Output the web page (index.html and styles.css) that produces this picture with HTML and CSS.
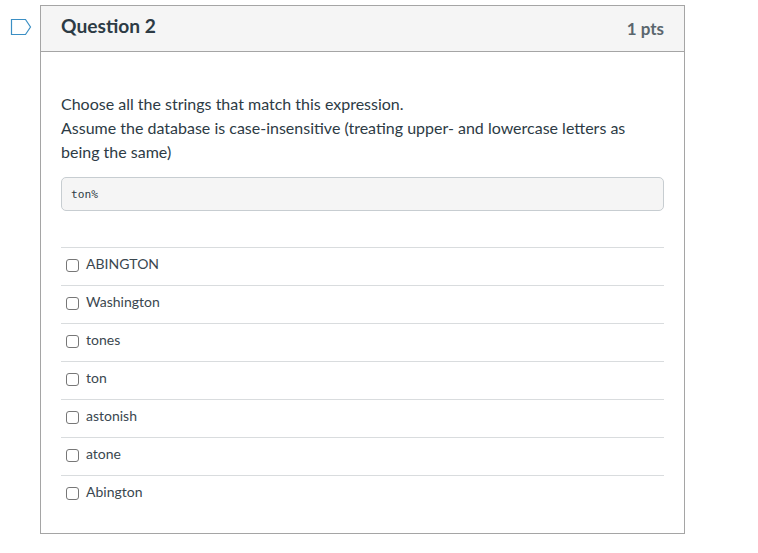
FILE: index.html

```html
<!DOCTYPE html>
<html lang="en">
<head>
  <meta charset="UTF-8" />
  <title>Question 2</title>
  <link rel="stylesheet" href="styles.css">
</head>
<body>

  <div class="quiz">
    <svg class="flag" width="22" height="18" viewBox="0 0 22 18">
      <path d="M1.500 1.500h14l5 7.500-5 7.500h-14z" fill="none" stroke="#3b8fc4" stroke-width="1.200"/>
    </svg>

    <div class="question">
      <div class="header">
        <h2>Question 2</h2>
        <span class="pts">1 pts</span>
      </div>

      <div class="content">
        <p>Choose all the strings that match this expression.<br>Assume the database is case-insensitive (treating upper- and lowercase letters as being the same)</p>

        <pre>ton%</pre>

        <div class="answers">
          <label><input type="checkbox"> ABINGTON</label>
          <label><input type="checkbox"> Washington</label>
          <label><input type="checkbox"> tones</label>
          <label><input type="checkbox"> ton</label>
          <label><input type="checkbox"> astonish</label>
          <label><input type="checkbox"> atone</label>
          <label><input type="checkbox"> Abington</label>
        </div>
      </div>
    </div>
  </div>

</body>
</html>
```

FILE: styles.css

```css
body {
  font-family: 'Lato', sans-serif;
  background: #fff;
  color: #2d3b45;
  margin: 0;
  padding: 0;
}

.quiz {
  display: flex;
  align-items: flex-start;
  padding: 5px 0 0 10px;
}

.flag {
  margin-top: 13px;
  margin-right: 8px;
}

.question {
  width: 645px;
  box-sizing: border-box;
  border: 1px solid #a5a5a5;
}

.header {
  display: flex;
  justify-content: space-between;
  align-items: center;
  height: 45px;
  padding: 0 20px;
  background: #f5f5f5;
  border-bottom: 1px solid #a5a5a5;
}

.header h2 {
  margin: 0 0 6px;
  font-size: 19.200px;
  font-weight: bold;
}

.pts {
  font-size: 17px;
  font-weight: bold;
  color: #5a666e;
}

.content {
  padding: 40px 20px 20px;
}

.content p {
  margin: 0;
  font-size: 16px;
  line-height: 24px;
}

pre {
  margin: 13px 0 36px;
  height: 34px;
  box-sizing: border-box;
  padding: 0 9px;
  font-family: 'DejaVu Sans Mono', monospace;
  font-size: 11.200px;
  line-height: 34px;
  background: #f5f5f5;
  border: 1px solid #c7cdd1;
  border-radius: 5px;
}

.answers label {
  display: flex;
  align-items: center;
  gap: 7px;
  height: 31px;
  padding: 0 0 6px 5px;
  border-top: 1px solid #d9dcde;
  font-size: 14px;
  color: #3a474f;
}

.answers input {
  appearance: none;
  width: 13px;
  height: 13px;
  margin: 4px 0 0;
  background: #fff;
  border: 1px solid #777;
  border-radius: 3px;
}
```
